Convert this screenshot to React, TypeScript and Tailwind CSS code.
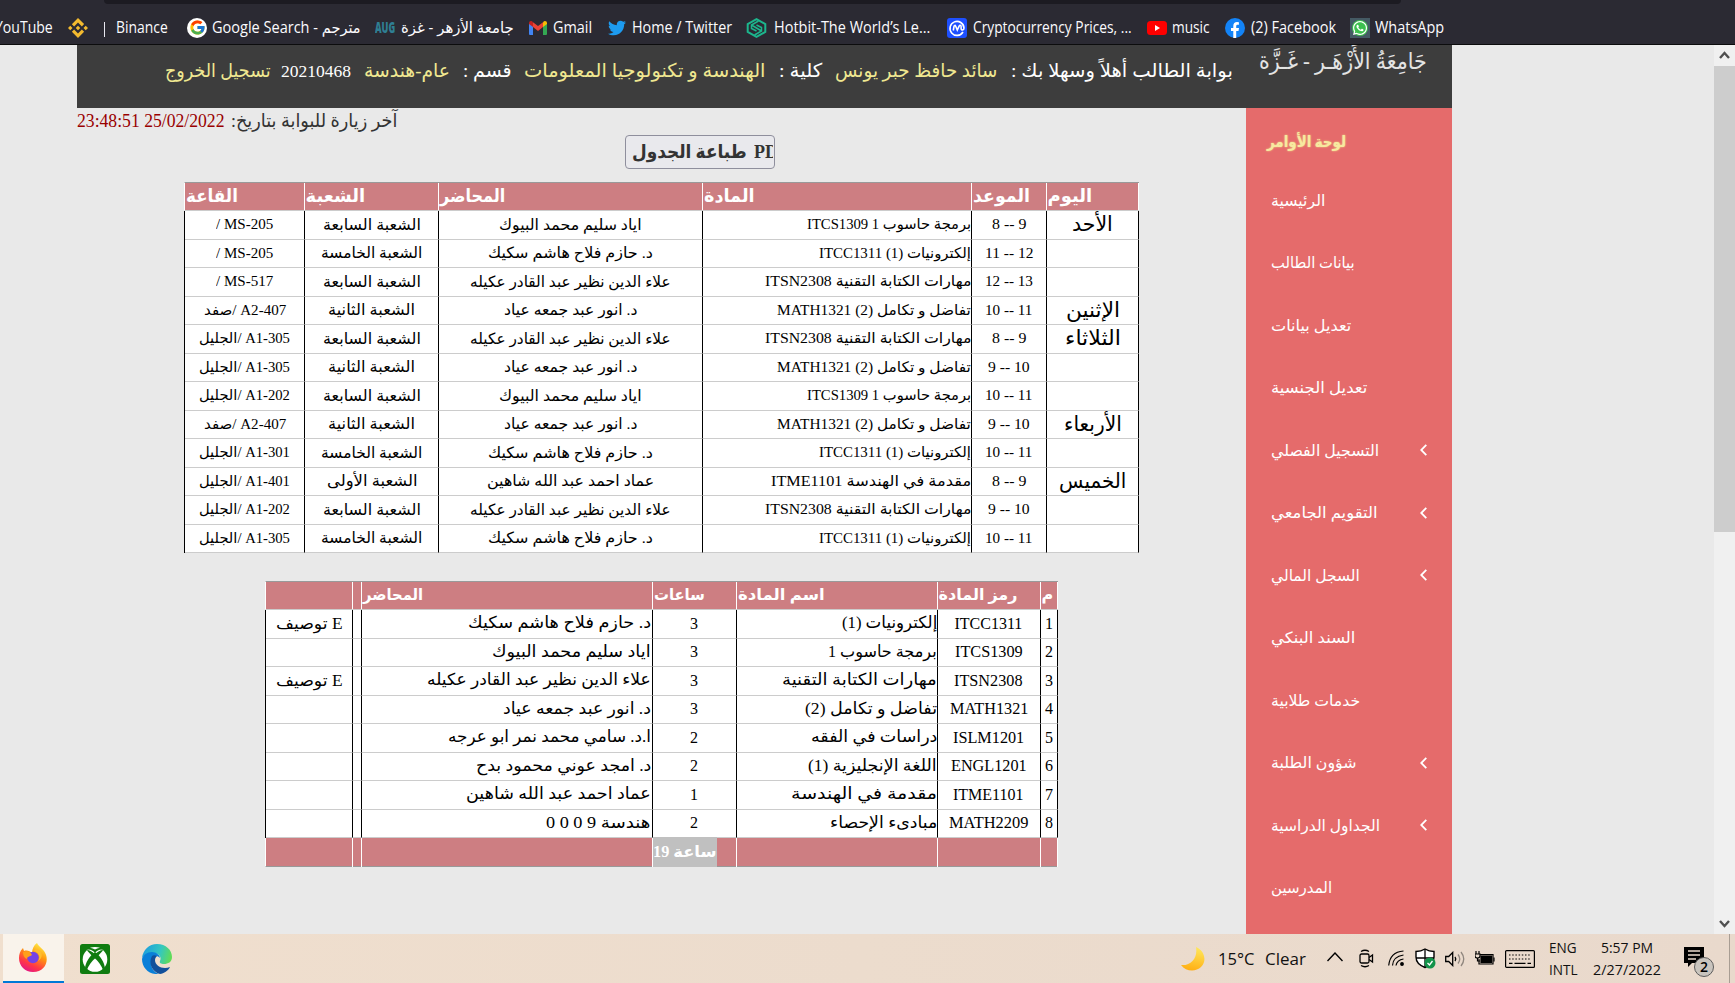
import React, { useLayoutEffect, useRef, useState } from "react";
import { FaTwitter, FaWhatsapp } from "react-icons/fa";
import { FcGoogle } from "react-icons/fc";
import { SiBinance } from "react-icons/si";

type FitProps = { w: number; children: React.ReactNode; rtl?: boolean; className?: string };

/** Text that is condensed or widened to a given advance width. */
function Fit({ w, children, rtl = true, className = "" }: FitProps) {
  const ref = useRef<HTMLSpanElement>(null);
  const [scale, setScale] = useState(1);
  useLayoutEffect(() => {
    if (ref.current) setScale(w / ref.current.offsetWidth);
  }, [w]);
  return (
    <span dir="ltr" className={"inline-flex shrink-0 justify-start whitespace-nowrap " + className} style={{ width: w }}>
      <span ref={ref} dir={rtl ? "rtl" : "ltr"} className="inline-block shrink-0 origin-left whitespace-pre" style={{ transform: `scaleX(${scale})` }}>
        {children}
      </span>
    </span>
  );
}

function Bookmarks() {
  return (
    <div className="h-[45px] shrink-0 overflow-hidden border-b border-[#0c0c0d] bg-[#2b2a33] text-[15.5px] text-[#fbfbfe] font-['Open_Sans','DejaVu_Sans',sans-serif]">
      <div className="ml-[104px] h-1 w-[1297px] rounded-b bg-[#1c1b22]" />
      <div className="mt-[11px] flex h-[25px] items-center">
        <Fit w={58} rtl={false} className="-ml-[5px]">YouTube</Fit>
        <SiBinance className="ml-[15px] size-5 shrink-0 text-[#f3ba2f]" />
        <span className="ml-4 mt-[3px] h-[15px] w-px shrink-0 bg-[#e8e8f0]" />
        <Fit w={52} rtl={false} className="ml-[11px]">Binance</Fit>
        <span className="ml-[19px] flex size-5 shrink-0 items-center justify-center rounded-full bg-white">
          <FcGoogle className="size-[17px]" />
        </span>
        <Fit w={149} rtl={false} className="ml-[5px]">Google Search - مترجم</Fit>
        <Fit w={20} rtl={false} className="ml-[14px] text-[15px] font-extrabold text-[#2f7f93]">AUG</Fit>
        <Fit w={113} className="ml-[6px]">جامعة الأزهر - غزة</Fit>
        <svg viewBox="0 0 18 14" className="ml-[15px] h-[14px] w-[18px] shrink-0">
          <path d="M0 2v11q0 1 1 1h3V5z" fill="#4285f4" />
          <path d="M18 2v11q0 1-1 1h-3V5z" fill="#34a853" />
          <path d="M4 1.2 9 5l5-3.8V6L9 10 4 6z" fill="#ea4335" />
          <path d="M0 2q0-2 2-2 1 0 2 1.2V6L0 3z" fill="#c5221f" />
          <path d="M18 2q0-2-2-2-1 0-2 1.2V6l4-3z" fill="#fbbc04" />
        </svg>
        <Fit w={39} rtl={false} className="ml-[6px]">Gmail</Fit>
        <FaTwitter className="ml-[16px] size-[18px] shrink-0 text-[#1d9bf0]" />
        <Fit w={100} rtl={false} className="ml-[6px]">Home / Twitter</Fit>
        <svg viewBox="0 0 21 20" className="ml-[14px] h-5 w-[21px] shrink-0" fill="none" stroke="#1cb68d">
          <path d="M10.5 1.2 19.3 6v8l-8.8 4.8L1.7 14V6z" strokeWidth="2" />
          <path d="M12.500 3 5.500 7v3.500l5 2.500M8.500 17l7-4V9.500l-5-2.500M5.500 7l10 6" strokeWidth="1.500" />
        </svg>
        <Fit w={156} rtl={false} className="ml-[7px]">Hotbit-The World’s Le...</Fit>
        <svg viewBox="0 0 20 20" className="ml-[17px] size-5 shrink-0">
          <rect width="20" height="20" rx="3" fill="#1e50ff" />
          <path d="M16 14a7 7 0 1 1 1-4c0 2.6-2.9 2.4-2.9.4V8.6c0-1.6-1.4-1.8-2-.4L10.300 12 8.700 8.200C8.200 7 7.200 7.300 7 8.400L6.300 12.500" fill="none" stroke="white" strokeWidth="1.6" />
        </svg>
        <Fit w={159} rtl={false} className="ml-[6px]">Cryptocurrency Prices, ...</Fit>
        <svg viewBox="0 0 20 14" className="ml-[15px] h-[14px] w-5 shrink-0">
          <rect width="20" height="14" rx="3.500" fill="#ff0000" />
          <path d="m8 4 5 3-5 3z" fill="white" />
        </svg>
        <Fit w={38} rtl={false} className="ml-[5px]">music</Fit>
        <svg viewBox="0 0 20 20" className="ml-[15px] size-5 shrink-0">
          <circle cx="10" cy="10" r="10" fill="#1383f7" />
          <path d="M8.300 20v-7H6v-3h2.300V8c0-2.600 1.400-3.900 3.700-3.900l1.900.2v2.500h-1.300c-1 0-1.400.6-1.400 1.400V10H14l-.5 3h-2.300v7z" fill="white" />
        </svg>
        <Fit w={85} rtl={false} className="ml-[6px]">(2) Facebook</Fit>
        <span className="ml-[14px] flex size-5 shrink-0 items-center justify-center bg-[#455a64]">
          <span className="flex size-4 items-center justify-center rounded-full bg-[#3cc14e]">
            <FaWhatsapp className="size-4 shrink-0 text-white" />
          </span>
        </span>
        <Fit w={69} rtl={false} className="ml-[5px]">WhatsApp</Fit>
      </div>
    </div>
  );
}

function Header() {
  return (
    <header className="ml-[77px] flex h-[63px] w-[1375px] shrink-0 overflow-hidden bg-[#3d3d3d] text-[19px] text-white">
      <div className="ml-[88px] flex h-[53px] items-center">
        <Fit w={106} className="text-[#f0e891]">تسجيل الخروج</Fit>
        <Fit w={70} rtl={false} className="ml-[10px] text-[17.5px]">20210468</Fit>
        <Fit w={86} className="ml-[13px] text-[#f0e891]">عام-هندسة</Fit>
        <Fit w={49} className="ml-[13px]">قسم :</Fit>
        <Fit w={241} className="ml-[12px] text-[#f0e891]">الهندسة و تكنولوجيا المعلومات</Fit>
        <Fit w={43} className="ml-[14px]">كلية :</Fit>
        <Fit w={162} className="ml-[13px] text-[#f0e891]">سائد حافظ جبر يونس</Fit>
        <Fit w={222} className="ml-[14px]">بوابة الطالب أهلاً وسهلا بك :</Fit>
      </div>
      <Fit w={168} className="ml-[26px] h-[35px] items-center text-[23px] text-[#e4e4e4]">جَامِعَةُ الأَزْهَـر - غَـزَّة</Fit>
    </header>
  );
}

type Txt = [string, number];
const SABIA: Txt = ["الشعبة السابعة", 98];
const KHAMISA: Txt = ["الشعبة الخامسة", 101];
const THANIA: Txt = ["الشعبة الثانية", 87];
const OULA: Txt = ["الشعبة الأولى", 90];
const EYAD: Txt = ["اياد سليم محمد البيوك", 143];
const HAZEM: Txt = ["د. حازم فلاح هاشم سكيك", 165];
const ALAA: Txt = ["علاء الدين نظير عبد القادر عكيله", 201];
const ANWAR: Txt = ["د. انور عبد جمعه عياد", 133];
const EMAD: Txt = ["عماد احمد عبد الله شاهين", 167];
const PROG: Txt = ["برمجة حاسوب 1 ITCS1309", 164];
const ELEC: Txt = ["إلكترونيات (1) ITCC1311", 152];
const WRIT: Txt = ["مهارات الكتابة التقنية ITSN2308", 206];
const CALC: Txt = ["تفاضل و تكامل (2) MATH1321", 194];
const ENGI: Txt = ["مقدمة في الهندسة ITME1101", 200];
const NONE: Txt = ["", 0];

type Slot = { day: Txt; time: Txt; subject: Txt; teacher: Txt; section: Txt; room: Txt };
const s = (day: Txt, time: Txt, subject: Txt, teacher: Txt, section: Txt, room: Txt): Slot => ({ day, time, subject, teacher, section, room });

const SCHEDULE: Slot[] = [
  s(["الأحد", 41], ["8 -- 9", 34], PROG, EYAD, SABIA, ["MS-205 /", 57]),
  s(NONE, ["11 -- 12", 48], ELEC, HAZEM, KHAMISA, ["MS-205 /", 57]),
  s(NONE, ["12 -- 13", 48], WRIT, ALAA, SABIA, ["MS-517 /", 57]),
  s(["الإثنين", 54], ["10 -- 11", 47], CALC, ANWAR, THANIA, ["A2-407 /صفد", 82]),
  s(["الثلاثاء", 56], ["8 -- 9", 34], WRIT, ALAA, SABIA, ["A1-305 /الجليل", 91]),
  s(NONE, ["9 -- 10", 42], CALC, ANWAR, THANIA, ["A1-305 /الجليل", 91]),
  s(NONE, ["10 -- 11", 47], PROG, EYAD, SABIA, ["A1-202 /الجليل", 91]),
  s(["الأربعاء", 58], ["9 -- 10", 42], CALC, ANWAR, THANIA, ["A2-407 /صفد", 82]),
  s(NONE, ["10 -- 11", 47], ELEC, HAZEM, KHAMISA, ["A1-301 /الجليل", 91]),
  s(["الخميس", 67], ["8 -- 9", 34], ENGI, EMAD, OULA, ["A1-401 /الجليل", 91]),
  s(NONE, ["9 -- 10", 42], WRIT, ALAA, SABIA, ["A1-202 /الجليل", 91]),
  s(NONE, ["10 -- 11", 47], ELEC, HAZEM, KHAMISA, ["A1-305 /الجليل", 91]),
];

type CellProps = { t: Txt; align?: "center" | "end"; ltr?: boolean; className?: string };

function Cell({ t, align = "center", ltr = false, className = "" }: CellProps) {
  return (
    <div className={"flex items-center border-r border-b border-r-black border-b-[#ccc] pb-px leading-none " + (align === "end" ? "justify-end " : "justify-center ") + className}>
      {t[0] && <Fit w={t[1]} rtl={!ltr}>{t[0]}</Fit>}
    </div>
  );
}

function HeadCell({ t }: { t: Txt }) {
  return <div className="flex items-center border-r border-white pb-[2px] pl-[0.5px] leading-none">{t[0] && <Fit w={t[1]}>{t[0]}</Fit>}</div>;
}

function ScheduleTable() {
  const cols = "grid grid-cols-[120px_134px_264px_269px_75px_92px] ";
  return (
    <div className="ml-[184px] mt-[13px] w-[955px] text-[14.5px] text-black">
      <div className={cols + "h-[29px] border-l border-t border-b border-l-white border-t-[#999] border-b-[#ccc] bg-[#cd7e82] text-[18px] font-bold text-white"}>
        <HeadCell t={["القاعة", 52]} />
        <HeadCell t={["الشعبة", 60]} />
        <HeadCell t={["المحاضر", 65]} />
        <HeadCell t={["المادة", 51]} />
        <HeadCell t={["الموعد", 57]} />
        <HeadCell t={["اليوم", 45]} />
      </div>
      {SCHEDULE.map((r, i) => (
        <div key={i} className={cols + "border-l border-l-black bg-white " + (i % 2 ? "h-7" : "h-[29px]")}>
          <Cell t={r.room} />
          <Cell t={r.section} className="text-[15.5px]" />
          <Cell t={r.teacher} className="text-[15.5px]" />
          <Cell t={r.subject} align="end" />
          <Cell t={r.time} ltr className="pr-px" />
          <Cell t={r.day} className="text-[20.5px]" />
        </div>
      ))}
    </div>
  );
}

type Course = { code: Txt; name: Txt; hours: string; teacher: Txt; spec: boolean };
const COURSES: Course[] = [
  { code: ["ITCC1311", 68], name: ["إلكترونيات (1)", 95], hours: "3", teacher: ["د. حازم فلاح هاشم سكيك", 183], spec: true },
  { code: ["ITCS1309", 68], name: ["برمجة حاسوب 1", 109], hours: "3", teacher: ["اياد سليم محمد البيوك", 159], spec: false },
  { code: ["ITSN2308", 69], name: ["مهارات الكتابة التقنية", 155], hours: "3", teacher: ["علاء الدين نظير عبد القادر عكيله", 224], spec: true },
  { code: ["MATH1321", 78], name: ["تفاضل و تكامل (2)", 132], hours: "3", teacher: ["د. انور عبد جمعه عياد", 148], spec: false },
  { code: ["ISLM1201", 71], name: ["دراسات في الفقه", 126], hours: "2", teacher: ["ا.د. سامي محمد نمر ابو عرجه", 203], spec: false },
  { code: ["ENGL1201", 76], name: ["اللغة الإنجليزية (1)", 129], hours: "2", teacher: ["د. امجد عوني محمود بدح", 175], spec: false },
  { code: ["ITME1101", 71], name: ["مقدمة في الهندسة", 146], hours: "1", teacher: ["عماد احمد عبد الله شاهين", 185], spec: false },
  { code: ["MATH2209", 79], name: ["مبادىء الإحصاء", 107], hours: "2", teacher: ["هندسة 9 0 0 0", 105], spec: false },
];

function CourseTable() {
  const cols = "grid grid-cols-[87px_9px_291px_84px_201px_103px_17px] ";
  return (
    <div className="ml-[265px] mt-[28px] w-[793px] text-[16px] text-black">
      <div className={cols + "h-[29px] border-l border-t border-b border-l-white border-t-[#999] border-b-[#ccc] bg-[#cd7e82] text-[16px] font-bold text-white"}>
        <HeadCell t={NONE} />
        <HeadCell t={NONE} />
        <HeadCell t={["المحاضر", 60]} />
        <HeadCell t={["ساعات", 51]} />
        <HeadCell t={["اسم المادة", 87]} />
        <HeadCell t={["رمز المادة", 79]} />
        <HeadCell t={["م", 12]} />
      </div>
      {COURSES.map((c, i) => (
        <div key={i} className={cols + "border-l border-l-black bg-white " + (i % 2 ? "h-7" : "h-[29px]")}>
          <Cell t={c.spec ? ["E توصيف", 66] : NONE} />
          <Cell t={NONE} />
          <Cell t={c.teacher} align="end" className="pr-px text-[16.5px]" />
          <Cell t={[c.hours, 8]} className="pr-px" />
          <Cell t={c.name} align="end" className="text-[16.5px]" />
          <Cell t={c.code} ltr className="pr-px" />
          <Cell t={[String(i + 1), 8]} />
        </div>
      ))}
      <div className={cols + "h-[29px] border-l border-b border-l-white border-b-[#999] bg-[#cd7e82] text-[16px] font-bold text-white"}>
        <HeadCell t={NONE} />
        <HeadCell t={NONE} />
        <HeadCell t={NONE} />
        <div className="flex border-r border-white">
          <div className="-mt-px flex h-[30px] w-16 items-center bg-[#c0c0c0] pb-px leading-none">
            <Fit w={63}>ساعة 19</Fit>
          </div>
        </div>
        <HeadCell t={NONE} />
        <HeadCell t={NONE} />
        <HeadCell t={NONE} />
      </div>
    </div>
  );
}

const MENU: { t: Txt; sub?: boolean }[] = [
  { t: ["الرئيسية", 54] },
  { t: ["بيانات الطالب", 84] },
  { t: ["تعديل بيانات", 80] },
  { t: ["تعديل الجنسية", 96] },
  { t: ["التسجيل الفصلي", 108], sub: true },
  { t: ["التقويم الجامعي", 107], sub: true },
  { t: ["السجل المالي", 89], sub: true },
  { t: ["السند البنكي", 84] },
  { t: ["خدمات طلابية", 89] },
  { t: ["شؤون الطلبة", 86], sub: true },
  { t: ["الجداول الدراسية", 109], sub: true },
  { t: ["المدرسين", 61] },
];

function Sidebar() {
  return (
    <nav className="flex w-[206px] shrink-0 flex-col overflow-hidden bg-[#e56b6b] text-[15.5px] text-white">
      <div className="flex h-[61px] shrink-0 items-center pl-[21px] pt-[6px] font-bold text-[#f7e9a0]">
        <Fit w={79} className="[text-shadow:0_0_2px_#f0e68c]">لوحة الأوامر</Fit>
      </div>
      {MENU.map(({ t, sub }) => (
        <div key={t[0]} className="flex h-[62.5px] shrink-0 items-center justify-between pl-[25px] pr-[25px]">
          <Fit w={t[1]}>{t[0]}</Fit>
          {sub && (
            <svg viewBox="0 0 7 12" className="h-3 w-[7px]" fill="none" stroke="white" strokeWidth="1.800">
              <path d="M6.300.800 1.200 6l5.100 5.200" />
            </svg>
          )}
        </div>
      ))}
    </nav>
  );
}

function Scrollbar() {
  return (
    <div className="flex w-[21px] shrink-0 flex-col items-center justify-between bg-[#f0f0f0]">
      <div className="flex w-full flex-col items-center">
        <svg viewBox="0 0 21 21" className="size-[21px]" fill="none" stroke="#505050" strokeWidth="2.400">
          <path d="m6 13 4.500-5 4.500 5" />
        </svg>
        <div className="h-[466px] w-full bg-[#cdcdcd]" />
      </div>
      <svg viewBox="0 0 21 21" className="size-[21px]" fill="none" stroke="#505050" strokeWidth="2.400">
        <path d="m6 8 4.500 5 4.500-5" />
      </svg>
    </div>
  );
}

function Taskbar() {
  return (
    <div className="flex h-[49px] shrink-0 items-center bg-gradient-to-r from-[#f0dfce] via-[#ecdccd] to-[#e9d9cc] text-[17px] text-[#111] font-['Open_Sans',sans-serif]">
      <div className="ml-[3px] flex h-full w-[61px] items-center justify-center border-b-2 border-[#0078d7] bg-[#f9f3eb]">
        <svg viewBox="0 0 28 29" className="mr-[2px] h-[29px] w-7">
          <defs>
            <linearGradient id="fox" x1="0.800" y1="0" x2="0.300" y2="1">
              <stop offset="0" stopColor="#fff44f" />
              <stop offset="0.400" stopColor="#ff980e" />
              <stop offset="0.750" stopColor="#ff3647" />
              <stop offset="1" stopColor="#e31587" />
            </linearGradient>
          </defs>
          <path d="M18 0c1 3 5 5 7 8 6 8 2 21-11 21C6 29 0 23 0 15c0-4 1-7 4-10l1 3c3-1 6 0 8 2 0-4 2-8 5-10z" fill="url(#fox)" />
          <circle cx="14" cy="14.500" r="5.800" fill="#7542e5" />
          <path d="M4 9c4-2 8 0 9 3-2 2-5 1-5 4-3-1-4-4-4-7z" fill="#ff9f1c" />
          <path d="M15 8c5 1 7 6 4 10 4-2 5-7 2-10-2-2-5-2-6 0z" fill="#ffbd2f" />
        </svg>
      </div>
      <svg viewBox="0 0 30 30" className="ml-4 size-[30px]">
        <rect width="30" height="30" rx="2.500" fill="#107c10" />
        <circle cx="15" cy="15.500" r="12.300" fill="white" />
        <path d="M7 5.500C11 5 13 7 15 8.500 17 7 19 5 23 5.500l-2-3H9z" fill="#107c10" />
        <path d="M10 3.800q5-1.500 10 0-3 .4-5 1.800-2-1.400-5-1.800z" fill="white" />
        <path d="M15 8c5 4 10 10 10 17.500l-2 1C22 22 18 17 15 14.500 12 17 8 22 7 26.500l-2-1C5 18 10 12 15 8z" fill="#107c10" />
        <path d="M7 6q4 0 8 4.500L13 13 7.500 7zM23 6q-4 0-8 4.500l2 2.500 5.500-6z" fill="#107c10" />
      </svg>
      <svg viewBox="0 0 30 30" className="ml-8 size-[30px]">
        <defs>
          <linearGradient id="sea" x1="0" y1="0.300" x2="1" y2="0.500">
            <stop offset="0" stopColor="#1c9be0" />
            <stop offset="0.600" stopColor="#34c7c0" />
            <stop offset="1" stopColor="#61dc56" />
          </linearGradient>
        </defs>
        <path d="M0 14C1 6 7 0 15 0c9 0 15 6 15 13 0 5-4 7-8 7-3 0-5-1-4-3 2-4-1-8-7-8C6 9 2 11 0 14z" fill="url(#sea)" />
        <path d="M0 15c1-4 5-7 10-7 4 0 8 3 8 6-3-4-9-1-9 5 0 5 3 9 8 11C7 31 0 24 0 15z" fill="#0a7fd8" />
        <path d="M10 12c-4 7 0 16 8 18 4-.5 8-3 10-7-7 3-15-1-15-7 0-2 1-3 2-4-2-1-4-1-5 0z" fill="#114f9b" />
      </svg>

      <svg viewBox="0 0 24 24" className="ml-[1009px] size-6 shrink-0">
        <defs>
          <linearGradient id="moon" x1="0.600" y1="0" x2="0.400" y2="1">
            <stop offset="0" stopColor="#ffe75a" />
            <stop offset="1" stopColor="#ffae13" />
          </linearGradient>
        </defs>
        <path d="M15 0c9 4 11 14 5 20-5 5-15 5-20-2 10 1 17-7 15-18z" fill="url(#moon)" />
      </svg>
      <Fit w={36} rtl={false} className="ml-[13px]">15°C</Fit>
      <Fit w={41} rtl={false} className="ml-[11px]">Clear</Fit>
      <svg viewBox="0 0 16 10" className="-mt-1 ml-[21px] h-[10px] w-4 shrink-0" fill="none" stroke="black" strokeWidth="1.400">
        <path d="m.500 9 7.500-8 7.500 8" />
      </svg>
      <svg viewBox="0 0 15 19" className="ml-4 h-[19px] w-[15px] shrink-0" fill="none" stroke="black" strokeWidth="1.300">
        <rect x="1" y="5" width="9" height="9" rx="1.500" />
        <path d="m10 8.500 3.500-2.500v7L10 10.500M2 2.500q4-2.500 8 0M2 16.500q4 2.500 8 0" />
      </svg>
      <svg viewBox="0 0 16 17" className="ml-[14px] h-[17px] w-4 shrink-0" fill="none" stroke="black" strokeWidth="1.200">
        <path d="M.700 15.500Q2 2 15.500 1M4.500 15.500Q5 6.500 15.500 5M8 15.500Q9 10 15.500 9" />
        <circle cx="14" cy="14" r="1.300" fill="black" />
      </svg>
      <svg viewBox="0 0 21 21" className="ml-[11px] size-[21px] shrink-0">
        <path d="M10 1q4 2.500 9 2.500V9q0 7-9 10.500Q1 16 1 9V3.500Q6 3.500 10 1z" fill="white" stroke="black" strokeWidth="1.400" />
        <path d="M10 1v18M1 10h18" stroke="black" strokeWidth="1.300" />
        <circle cx="15" cy="15" r="5.500" fill="#12934a" />
        <path d="m12.500 15 2 2 3-4" fill="none" stroke="white" strokeWidth="1.300" />
      </svg>
      <svg viewBox="0 0 20 16" className="ml-[9px] h-4 w-5 shrink-0" fill="none" stroke="black" strokeWidth="1.300">
        <path d="M.700 5.500h3l4-4v13l-4-4h-3z" />
        <path d="M10 6q1.500 2 0 4" />
        <path d="M13 3.500q3.500 4.500 0 9M16 1q5.500 7 0 14" stroke="#8f867e" />
      </svg>
      <svg viewBox="0 0 20 15" className="ml-[10px] h-[15px] w-5 shrink-0" fill="none" stroke="black" strokeWidth="1.200">
        <path d="M5 3.500h13v9.500H4V8" />
        <rect x="6" y="5" width="10.500" height="6.500" fill="black" />
        <path d="M19 6.500v4M1 0v3M4 0v3M0 3h5v2q0 2-2.500 2T0 5zM2.500 7v3H5" />
      </svg>
      <svg viewBox="0 0 30 18" className="ml-[10px] h-[18px] w-[30px] shrink-0" fill="none" stroke="black" strokeWidth="1.200">
        <rect x=".6" y=".6" width="28.800" height="16.800" rx="1" />
        <path d="M4 5h22M4 9h22" strokeDasharray="1.500 1.700" />
        <path d="M4 13.300h3.500M9.500 13.300h11M22.500 13.300H26" />
      </svg>
      <div className="mb-[2px] ml-[14px] flex w-[29px] shrink-0 flex-col items-start text-[15px] leading-[22px]">
        <Fit w={28} rtl={false}>ENG</Fit>
        <Fit w={29} rtl={false}>INTL</Fit>
      </div>
      <div className="mb-[2px] ml-[15px] flex w-[68px] shrink-0 flex-col items-center text-[15px] leading-[22px]">
        <Fit w={52} rtl={false}>5:57 PM</Fit>
        <Fit w={68} rtl={false}>2/27/2022</Fit>
      </div>
      <svg viewBox="0 0 30 31" className="ml-[23px] mt-[8px] h-[31px] w-[30px] shrink-0">
        <path d="M0 0h20v16H8l-4 4v-4H0z" fill="black" />
        <path d="M4 4h12M4 8h12M4 12h8" stroke="#ecdccd" strokeWidth="1.400" />
        <circle cx="20" cy="20" r="9.500" fill="#c9c4be" stroke="#5b5b5b" />
        <text x="20" y="25" fontSize="14" fontWeight="600" textAnchor="middle">2</text>
      </svg>
      <span className="ml-[15px] h-full w-px bg-[#a89d93]" />
    </div>
  );
}

export default function App() {
  return (
    <div className="flex h-[983px] w-[1735px] flex-col overflow-hidden bg-[#e9e9e9] font-['Liberation_Serif','DejaVu_Sans',serif]">
      <Bookmarks />
      <div className="flex min-h-0 flex-1">
        <div className="flex w-[1714px] shrink-0 flex-col">
          <Header />
          <div className="flex min-h-0 flex-1">
            <main className="w-[1246px] shrink-0">
              <div className="ml-[77px] flex h-[27px] items-center text-[18px]">
                <Fit w={148} rtl={false} className="text-[#990000]">23:48:51 25/02/2022</Fit>
                <Fit w={166} className="ml-[6px] text-[19px] text-[#333]">آخر زيارة للبوابة بتاريخ:</Fit>
              </div>
              <button className="ml-[625px] flex h-[34px] w-[150px] items-center overflow-hidden rounded border border-[#8f8f9d] bg-[#e9e9ed] pl-[6px] text-[18px] font-bold text-[#333]">
                <Fit w={115} className="text-[19px]">طباعة الجدول</Fit>
                <span className="ml-[7px] w-[19px] shrink-0 overflow-hidden text-left">PDF</span>
              </button>
              <ScheduleTable />
              <CourseTable />
            </main>
            <Sidebar />
          </div>
        </div>
        <Scrollbar />
      </div>
      <Taskbar />
    </div>
  );
}
